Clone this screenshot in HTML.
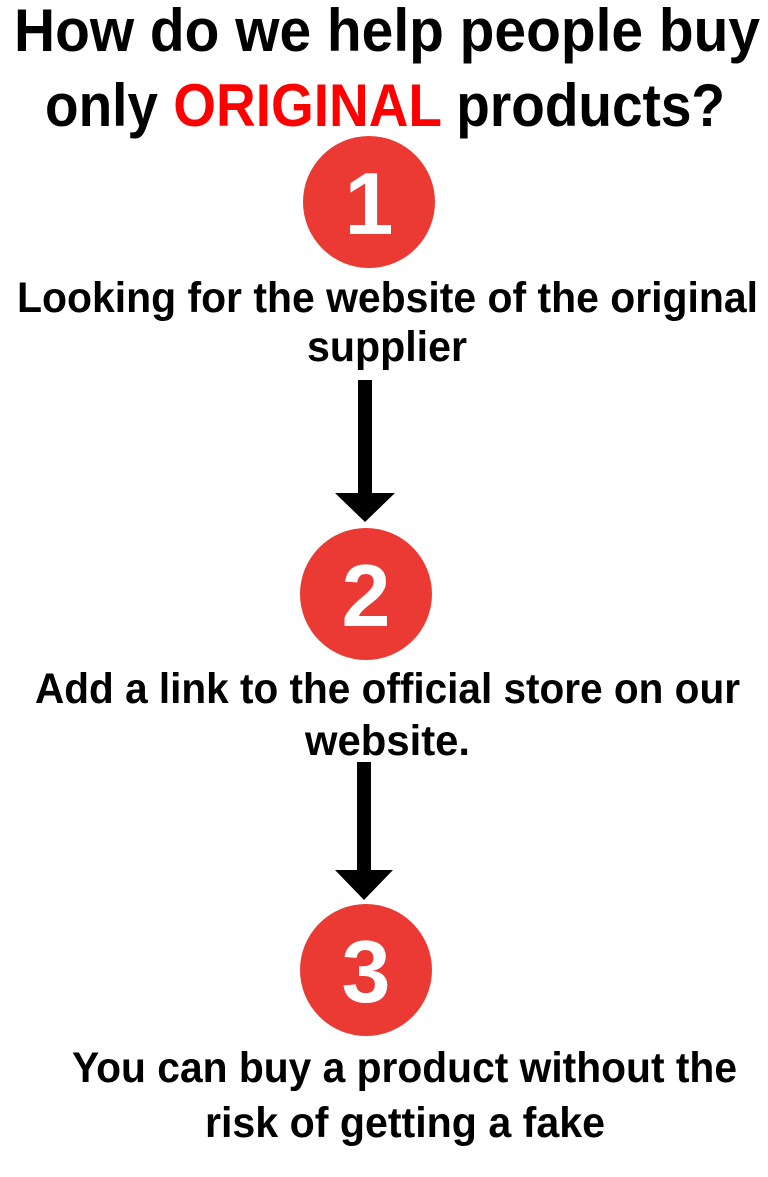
<!DOCTYPE html>
<html><head><meta charset="utf-8"><style>html,body{margin:0;padding:0;background:#fff}svg{display:block}</style></head>
<body>
<svg width="768" height="1177" viewBox="0 0 768 1177" xmlns="http://www.w3.org/2000/svg">
<g font-family="Liberation Sans, sans-serif" font-weight="bold" fill="#000">
<text x="14" y="51" font-size="60" textLength="746" lengthAdjust="spacingAndGlyphs">How do we help people buy</text>
<text x="45" y="126" font-size="60" textLength="680" lengthAdjust="spacingAndGlyphs">only <tspan fill="#f00">ORIGINAL</tspan> products?</text>
<text x="17" y="312" font-size="43" textLength="741" lengthAdjust="spacingAndGlyphs">Looking for the website of the original</text>
<text x="307" y="361" font-size="43" textLength="160" lengthAdjust="spacingAndGlyphs">supplier</text>
<text x="35" y="703" font-size="43" textLength="705" lengthAdjust="spacingAndGlyphs">Add a link to the official store on our</text>
<text x="305" y="755" font-size="43" textLength="165" lengthAdjust="spacingAndGlyphs">website.</text>
<text x="72" y="1082" font-size="43" textLength="665" lengthAdjust="spacingAndGlyphs">You can buy a product without the</text>
<text x="205" y="1137" font-size="43" textLength="400" lengthAdjust="spacingAndGlyphs">risk of getting a fake</text>
</g>
<g fill="#ea3a33">
<circle cx="369" cy="202" r="66"/>
<circle cx="366" cy="594" r="66"/>
<circle cx="366" cy="970" r="66"/>
</g>
<g font-family="Liberation Sans, sans-serif" font-weight="bold" fill="#fff" font-size="88" text-anchor="middle">
<text x="369" y="234">1</text>
<text x="366" y="626">2</text>
<text x="366" y="1002">3</text>
</g>
<g fill="#000">
<rect x="358" y="380" width="14" height="114"/>
<polygon points="335,493 395,493 365,522"/>
<rect x="357" y="762" width="14" height="109"/>
<polygon points="335,870 393,870 364,900"/>
</g>
</svg>
</body></html>
